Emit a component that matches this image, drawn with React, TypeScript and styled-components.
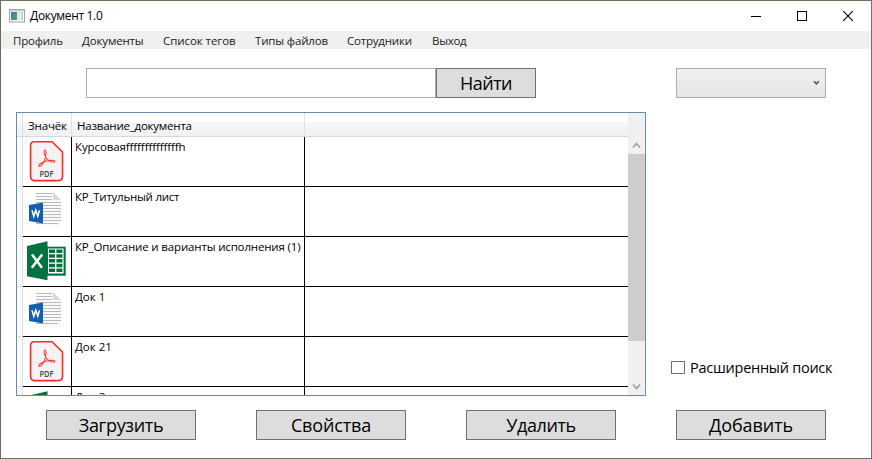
import React from "react";
import styled, { createGlobalStyle } from "styled-components";

const GlobalStyle = createGlobalStyle`
  * { box-sizing: border-box; }
  body { margin: 0; background: #fff; overflow: hidden; }
`;

const Window = styled.div`
  width: 872px;
  height: 459px;
  display: flex;
  flex-direction: column;
  background: #fff;
  border: 1px solid #707070;
  border-top-color: #727056;
  border-left-color: #6c6b5c;
  color: #000;
  font-family: "Open Sans", "Noto Sans", sans-serif;
  font-size: 12px;
`;

const TitleBar = styled.header`
  height: 30px;
  flex: none;
  display: flex;
  align-items: center;
  padding-left: 8px;
`;

const Title = styled.div`
  flex: 1;
  margin-left: 5px;
  white-space: nowrap;
  line-height: 16px;
  letter-spacing: -0.33px;
`;

const WindowButton = styled.button`
  width: 46px;
  height: 29px;
  padding: 0;
  border: 0;
  background: none;
  display: grid;
  place-items: center;
`;

const MenuBar = styled.nav`
  height: 18px;
  flex: none;
  display: flex;
  padding-left: 12px;
  background: #f0f0f0;
  color: #212121;
  font-size: 11.5px;
`;

const MenuItem = styled.div<{ $w: number; $ls: number }>`
  width: ${(p) => p.$w}px;
  line-height: 20px;
  white-space: nowrap;
  letter-spacing: ${(p) => p.$ls}px;
`;

const Content = styled.main`
  flex: 1;
  display: flex;
  flex-direction: column;
`;

const SearchRow = styled.div`
  display: flex;
  padding: 19px 0 0 85px;
`;

const SearchInput = styled.input`
  width: 350px;
  height: 30px;
  border: 1px solid #abadb3;
  background: #fff;
  outline: 0;
`;

const Button = styled.button<{ $ls?: number }>`
  width: 150px;
  height: 30px;
  padding: 0;
  border: 1px solid #707070;
  background: #ddd;
  color: #000;
  font: 18px/28px "Open Sans", "Noto Sans", sans-serif;
  letter-spacing: ${(p) => p.$ls ?? 0}px;
  white-space: nowrap;
`;

const FindButton = styled(Button)`
  width: 100px;
`;

const Combo = styled.div`
  width: 150px;
  height: 30px;
  margin-left: 140px;
  padding-right: 5px;
  display: flex;
  align-items: center;
  justify-content: flex-end;
  border: 1px solid #acacac;
  background: linear-gradient(#f0f0f0, #e5e5e5);
`;

const Middle = styled.div`
  display: flex;
  align-items: flex-end;
  padding: 14px 0 0 15px;
`;

const Grid = styled.div`
  width: 630px;
  height: 284px;
  display: flex;
  overflow: hidden;
  border: 1px solid #688caf;
`;

const GridBody = styled.div`
  width: 611px;
`;

const HeaderRow = styled.div`
  display: grid;
  grid-template-columns: 6px 49px 233px 1fr;
  height: 24px;
  border-bottom: 1px solid #d5d7da;
  background: linear-gradient(#fff 0 9px, #f7f8fa 9px, #f0f1f3);
`;

const HeaderCell = styled.div<{ $ls?: number; $line?: boolean }>`
  padding: 5px 0 0 5px;
  border-right: ${(p) => (p.$line === false ? "0" : "1px solid #dfe1e4")};
  font-size: 11.5px;
  line-height: 16px;
  white-space: nowrap;
  letter-spacing: ${(p) => p.$ls ?? 0}px;
`;

const Row = styled.div`
  display: grid;
  grid-template-columns: 6px 49px 233px 1fr;
  height: 50px;
`;

const RowHeader = styled.div`
  background: #fbfbfc;
  border-right: 1px solid #dcdee1;
  border-bottom: 1px solid #dcdee1;
`;

const Cell = styled.div<{ $last?: boolean }>`
  border-right: ${(p) => (p.$last ? "0" : "1px solid #000")};
  border-bottom: 1px solid #000;
`;

const IconCell = styled(Cell)`
  svg { display: block; }
`;

const NameCell = styled(Cell)<{ $ls: number }>`
  padding: 2px 0 0 3px;
  font-size: 11.5px;
  line-height: 16px;
  white-space: nowrap;
  letter-spacing: ${(p) => p.$ls}px;
`;

const ScrollBar = styled.div`
  width: 17px;
  display: flex;
  flex-direction: column;
  align-items: center;
  padding: 24px 0 0;
  background: #f0f0f0;
`;

const Arrow = styled.div`
  height: 17px;
  display: grid;
  place-items: center;
`;

const Thumb = styled.div`
  width: 17px;
  height: 187px;
  margin-bottom: 37px;
  background: #cdcdcd;
`;

const CheckLabel = styled.label`
  display: flex;
  align-items: center;
  height: 22px;
  margin: 0 0 18px 25px;
  font-size: 14.5px;
  letter-spacing: -0.26px;
  white-space: nowrap;
`;

const CheckBox = styled.span`
  width: 14px;
  height: 13px;
  margin-right: 5px;
  border: 1px solid #707070;
  background: #fff;
`;

const Footer = styled.footer`
  display: flex;
  gap: 60px;
  padding: 14px 0 0 45px;
`;

const AppIcon = () => (
  <svg width="16" height="14" viewBox="0 0 16 14">
    <defs>
      <linearGradient id="pane" x1="0" y1="0" x2="1" y2="1">
        <stop offset="0" stopColor="#4a76a8" />
        <stop offset="1" stopColor="#46a878" />
      </linearGradient>
    </defs>
    <rect x=".5" y=".5" width="15" height="12.5" fill="#f4f5f6" stroke="#9da3a8" />
    <path d="M1 1.8h14" stroke="#d2d6da" strokeWidth="1.6" />
    <rect x="2" y="3" width="6" height="8" fill="url(#pane)" />
    <rect x="8.5" y="3" width="2.5" height="8" fill="#dde3e6" />
    <rect x="12" y="3" width="2" height="8" fill="#c2d9d0" />
  </svg>
);

const PdfIcon = () => (
  <svg width="48" height="49" viewBox="0 0 48 49">
    <path d="M11 4.8h18L39.5 15v25a3.6 3.6 0 0 1-3.6 3.6H11.2A3.6 3.6 0 0 1 7.6 40V8.3A3.5 3.5 0 0 1 11 4.8z" fill="#f3f3f3" stroke="#ff2822" strokeWidth="1.6" />
    <path d="M15.9 29.1c-1-1.2 2.6-3.5 6-4.6 3.4-1.1 10-1.9 9.9-.1-.1 1.8-5.2.2-7.9-2.6-2.6-2.8-3.8-8.6-1.9-8.7 2-.1 1 7.5-1 11.4-1.6 3.1-4.2 5.7-5.1 4.6z" fill="none" stroke="#ff3932" strokeWidth="1.05" />
    <text x="16.5" y="39.8" fontFamily="Open Sans, sans-serif" fontSize="8.6" fontWeight="600" textLength="14" lengthAdjust="spacingAndGlyphs" fill="#444">PDF</text>
  </svg>
);

const WordIcon = () => (
  <svg width="48" height="49" viewBox="0 0 48 49">
    <path d="M13.5 5.5h17l7 7v28h-24z" fill="#fafafa" />
    <path d="M30 5v8h8z" fill="#d9d9d9" />
    <path d="M13 6.5h16M13 9.5h16M13 12.5h16M13 15.5h25M13 18.5h25M13 21.5h25M13 24.5h25M13 27.5h25M13 30.5h25M13 33.5h25M13 36.5h22" stroke="#bababa" strokeWidth="1" />
    <path d="M6 18l14-2.5v21L6 34z" fill="#135fae" />
    <path d="M9 23.2l1.8 6 2-6 2 6 1.7-6" fill="none" stroke="#fff" strokeWidth="1.55" />
  </svg>
);

const ExcelIcon = () => (
  <svg width="48" height="49" viewBox="0 0 48 49">
    <path d="M24 9.7h18.7v29H24z" fill="#04723f" />
    <path d="M25 11.5h15.6v25H25z" fill="#fff" />
    <path
      d="M26 12.5h6v3.5h-6zM33.4 12.5h6v3.5h-6zM26 17.3h6v3.4h-6zM33.4 17.3h6v3.4h-6zM26 22h6v3.5h-6zM33.4 22h6v3.5h-6zM26 26.8h6v3.5h-6zM33.4 26.8h6v3.5h-6zM26 31.6h6v3.5h-6zM33.4 31.6h6v3.5h-6z"
      fill="#04723f"
    />
    <path d="M4 9l20.5-4.8v39L4 39.3z" fill="#04723f" />
    <path d="M9 17.5l10 13.3M19.2 17.5L8.8 30.8" stroke="#fff" strokeWidth="2.5" />
  </svg>
);

const icons = { pdf: PdfIcon, word: WordIcon, excel: ExcelIcon };

const rows: { icon: keyof typeof icons; name: string; ls: number }[] = [
  { icon: "pdf", name: "Курсоваяffffffffffffffh", ls: -0.1 },
  { icon: "word", name: "КР_Титульный лист", ls: -0.24 },
  { icon: "excel", name: "КР_Описание и варианты исполнения (1)", ls: -0.16 },
  { icon: "word", name: "Док 1", ls: 0 },
  { icon: "pdf", name: "Док 21", ls: 0 },
  { icon: "excel", name: "Док 3", ls: 0 },
];

const menu: [string, number, number][] = [
  ["Профиль", 69, -0.2],
  ["Документы", 81, -0.15],
  ["Список тегов", 92, -0.07],
  ["Типы файлов", 92, -0.15],
  ["Сотрудники", 85, -0.2],
  ["Выход", 60, -0.3],
];

export default function App() {
  return (
    <>
      <GlobalStyle />
      <Window>
        <TitleBar>
          <AppIcon />
          <Title>Документ 1.0</Title>
          <WindowButton aria-label="Свернуть">
            <svg width="10" height="11" shapeRendering="crispEdges"><path d="M0 5.5h10" stroke="#000" /></svg>
          </WindowButton>
          <WindowButton aria-label="Развернуть">
            <svg width="10" height="10" shapeRendering="crispEdges"><path d="M.5.5h9v9h-9z" fill="none" stroke="#000" /></svg>
          </WindowButton>
          <WindowButton aria-label="Закрыть">
            <svg width="10" height="10"><path d="M0 0l10 10M10 0L0 10" stroke="#000" strokeWidth="1.15" /></svg>
          </WindowButton>
        </TitleBar>
        <MenuBar>
          {menu.map(([label, w, ls]) => (
            <MenuItem key={label} $w={w} $ls={ls}>{label}</MenuItem>
          ))}
        </MenuBar>
        <Content>
          <SearchRow>
            <SearchInput />
            <FindButton $ls={-0.5}>Найти</FindButton>
            <Combo>
              <svg width="7" height="6" viewBox="0 0 7 6"><path d="M1 1.2l2.4 2.6L5.8 1.2" fill="none" stroke="#555" strokeWidth="1.6" /></svg>
            </Combo>
          </SearchRow>
          <Middle>
            <Grid>
              <GridBody>
                <HeaderRow>
                  <HeaderCell />
                  <HeaderCell $ls={-0.15}>Значёк</HeaderCell>
                  <HeaderCell $ls={-0.22}>Название_документа</HeaderCell>
                  <HeaderCell $line={false} />
                </HeaderRow>
                {rows.map(({ icon, name, ls }) => {
                  const Icon = icons[icon];
                  return (
                    <Row key={name}>
                      <RowHeader />
                      <IconCell><Icon /></IconCell>
                      <NameCell $ls={ls}>{name}</NameCell>
                      <Cell $last />
                    </Row>
                  );
                })}
              </GridBody>
              <ScrollBar>
                <Arrow>
                  <svg width="9" height="7"><path d="M1 5.5l3.5-4 3.5 4" fill="none" stroke="#a0a0a0" strokeWidth="1.6" /></svg>
                </Arrow>
                <Thumb />
                <Arrow>
                  <svg width="9" height="7"><path d="M1 1.5l3.5 4 3.5-4" fill="none" stroke="#a0a0a0" strokeWidth="1.6" /></svg>
                </Arrow>
              </ScrollBar>
            </Grid>
            <CheckLabel><CheckBox />Расширенный поиск</CheckLabel>
          </Middle>
          <Footer>
            <Button $ls={-0.35}>Загрузить</Button>
            <Button $ls={-0.15}>Свойства</Button>
            <Button $ls={-0.4}>Удалить</Button>
            <Button $ls={-0.1}>Добавить</Button>
          </Footer>
        </Content>
      </Window>
    </>
  );
}
